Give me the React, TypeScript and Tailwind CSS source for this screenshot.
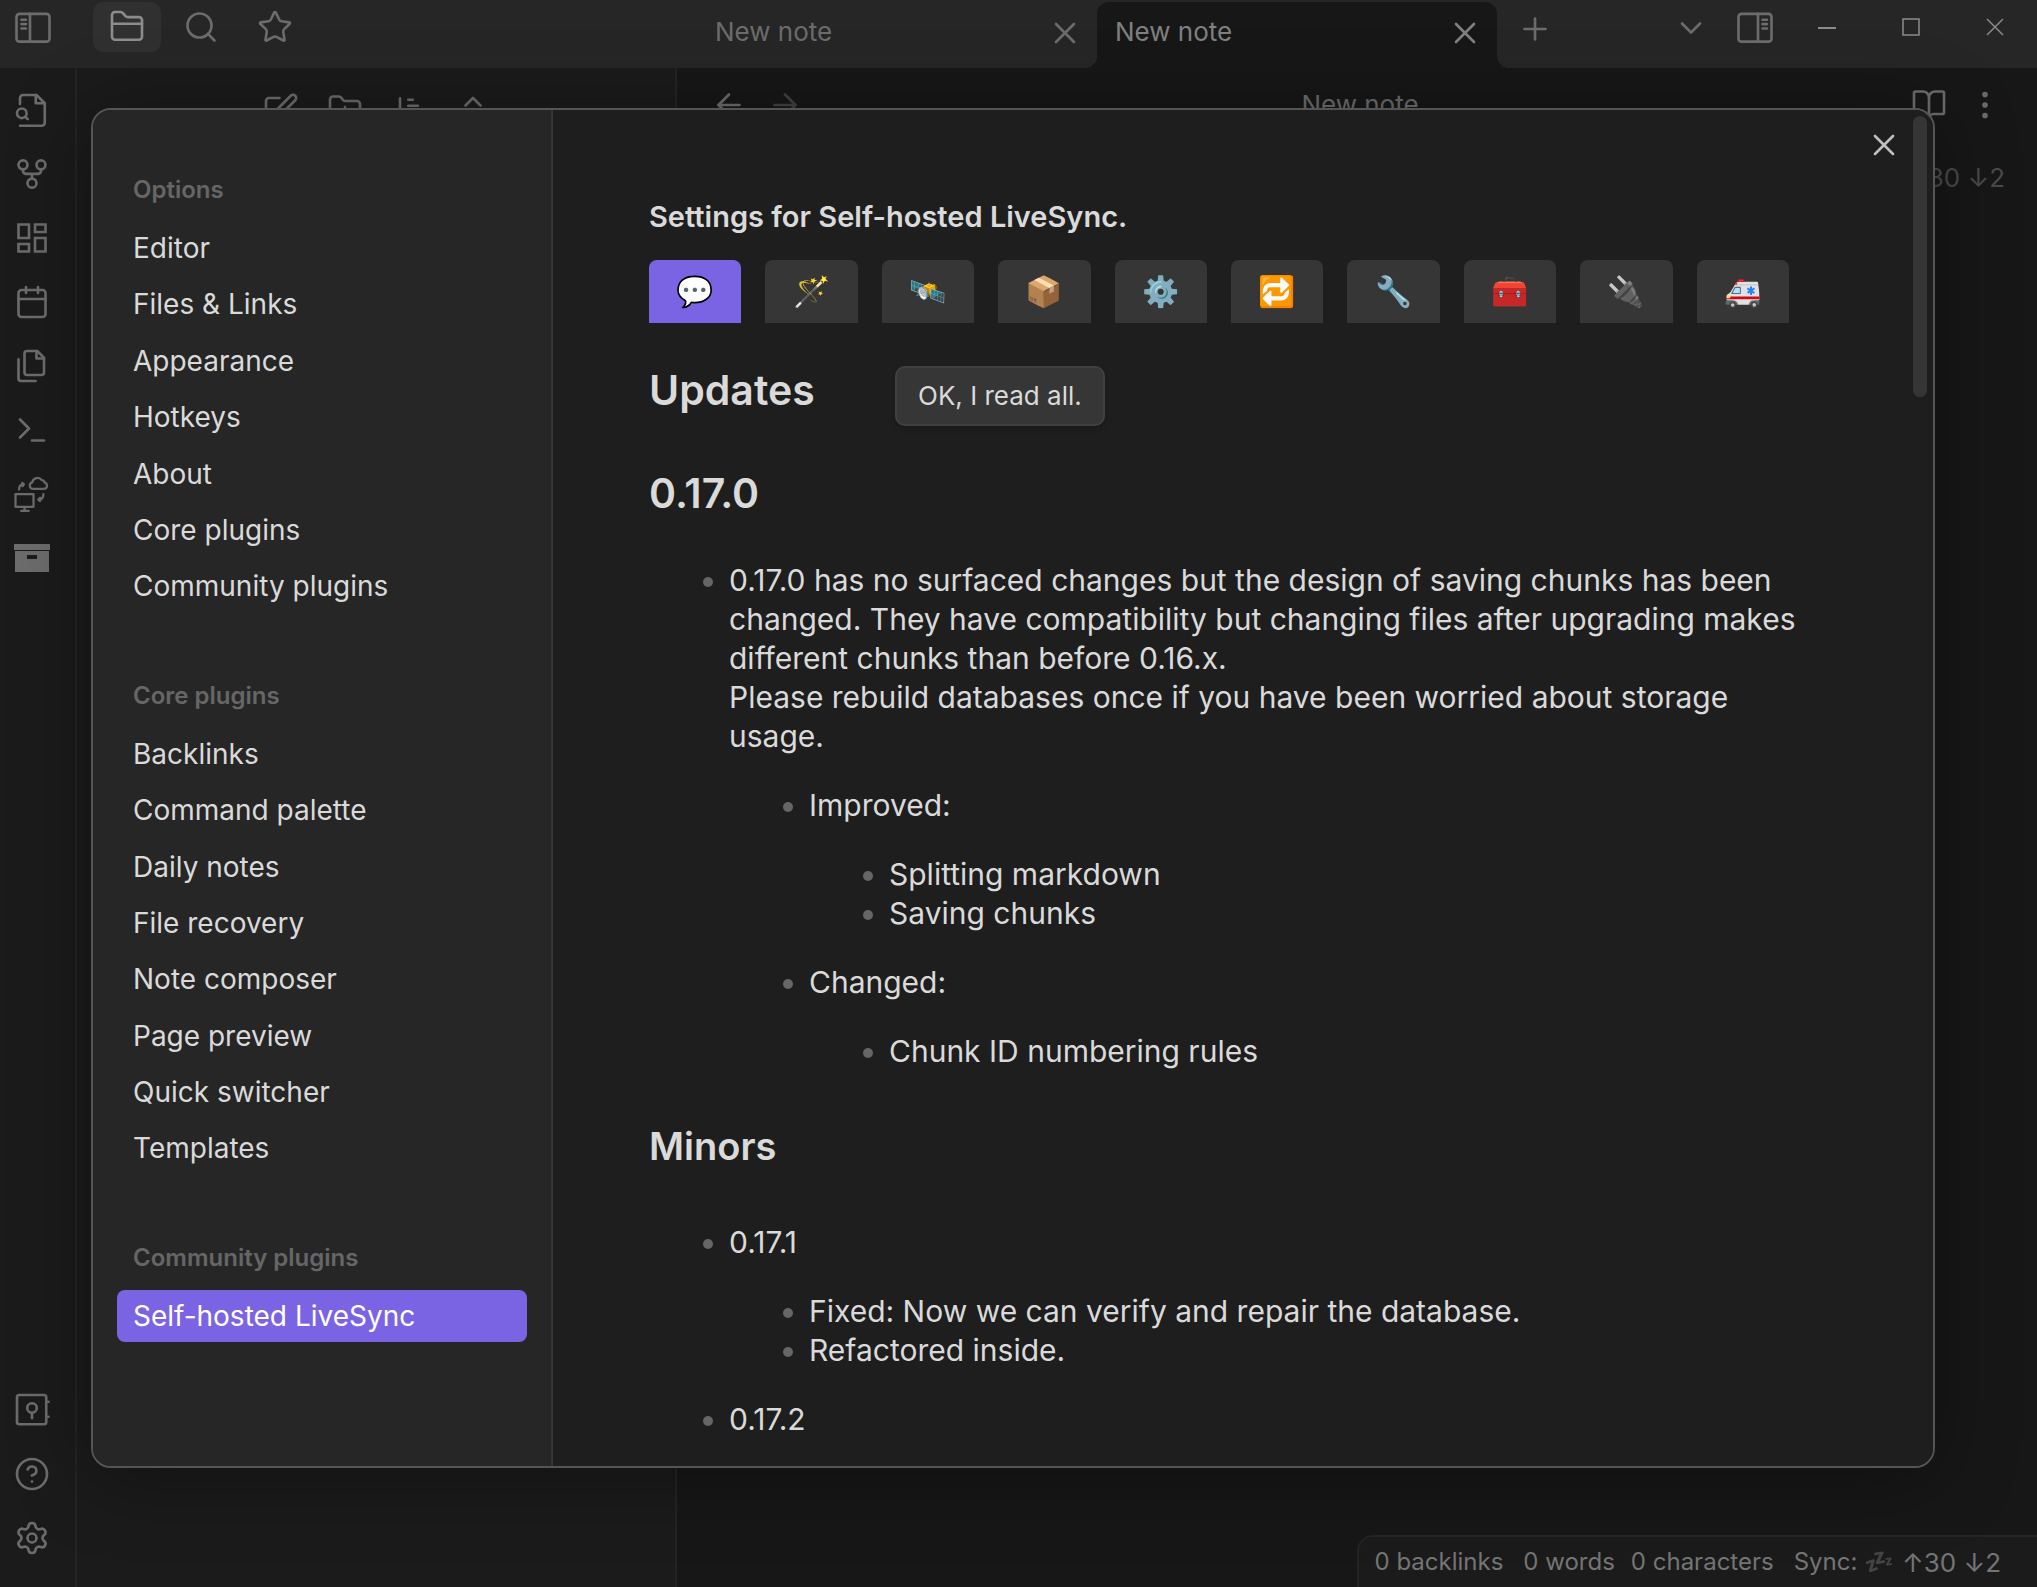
import React from "react";
import {
  Search, Star, Calendar, Terminal, HelpCircle, Settings, X, Plus, ChevronDown, BookOpen, MoreVertical,
  ArrowLeft, ArrowRight, ChevronsUpDown,
} from "lucide-react";

type SvgProps = { size?: number; strokeWidth?: number };

function Svg({ size = 36, strokeWidth = 1.75, children }: SvgProps & { children: React.ReactNode }) {
  return (
    <svg className="overflow-visible" width={size} height={size} viewBox="0 0 24 24" fill="none" stroke="currentColor" strokeWidth={strokeWidth} strokeLinecap="round" strokeLinejoin="round" aria-hidden="true">
      {children}
    </svg>
  );
}

const SidebarLeft = () => (
  <Svg>
    <rect x="1" y="2.600" width="22" height="18.500" rx="2" />
    <path d="M10 2.600v18.500M4.300 6.500h3M4.300 9.400h3M4.300 12.300h3" />
  </Svg>
);
const SidebarRight = () => (
  <Svg>
    <rect x="1" y="2.600" width="22" height="18.500" rx="2" />
    <path d="M14 2.600v18.500M17 6.500h3M17 9.400h3M17 12.300h3" />
  </Svg>
);
const FolderTab = () => (
  <Svg>
    <path d="M2 18.500V4a2 2 0 0 1 2-2h3.800a2 2 0 0 1 1.500.7l1.700 2a2 2 0 0 0 1.500.7H20a2 2 0 0 1 2 2v11.100a2 2 0 0 1-2 2H4a2 2 0 0 1-2-2z" />
    <path d="M2 9.800h20" />
  </Svg>
);
const SearchFile = () => (
  <Svg>
    <path d="M4 8V4a2 2 0 0 1 2-2h9l5.500 5.500V20.500a2 2 0 0 1-2 2H4" />
    <path d="M14.500 2v5.500h6" />
    <circle cx="5.200" cy="14.200" r="3.200" />
    <path d="m7.600 16.600 1.500 1.500" />
  </Svg>
);
const Graph = () => (
  <Svg>
    <circle cx="6" cy="5.900" r="3" />
    <circle cx="18" cy="5.900" r="3" />
    <circle cx="12" cy="18.100" r="3" />
    <path d="M6 8.900v1a2 2 0 0 0 2 2h8a2 2 0 0 0 2-2v-1M12 11.900v3.200" />
  </Svg>
);
const Dashboard = () => (
  <Svg>
    <path d="M3 3h7v9H3zM14 3h7v5h-7zM14 12h7v9h-7zM3 16h7v5H3z" strokeLinejoin="miter" />
  </Svg>
);
const Copies = () => (
  <Svg>
    <path d="M15.500 2H8.600C7.700 2 7 2.700 7 3.600v12.800c0 .9.7 1.600 1.600 1.600h9.800c.9 0 1.600-.7 1.600-1.600V6.500z" />
    <path d="M3 7.600v12.800c0 .9.7 1.600 1.600 1.600h9.800M15 2v5h5" />
  </Svg>
);
const Replicate = () => (
  <Svg strokeWidth={1.5}>
    <path d="M12.400 8.600a2.200 2.200 0 0 1-.2-4.300 3.500 3.500 0 0 1 6.300-1.600 1.900 1.900 0 0 1 1.900 1.700 2.150 2.150 0 0 1-.1 4.200z" />
    <rect x="1" y="12" width="12" height="8.500" />
    <path d="M7 20.500v2.500M4.700 23.200h5.100M3.400 9c0-2.400 1-3.400 2.900-3.400M5.500 4.600l1.100 1-1 1.200M19.600 12c0 2.400-1 3.600-2.800 3.700M17.400 14.500l-1.200 1.200 1.200 1" />
  </Svg>
);
const Archive = () => (
  <svg width="36" height="28" viewBox="0 0 36 28" fill="currentColor" aria-hidden="true">
    <path d="M0 0h36v6H0z" />
    <path fillRule="evenodd" d="M1 7h34v21H1zM13 11v4h10v-4z" />
  </svg>
);
const Vault = () => (
  <Svg>
    <rect x="2" y="2" width="19.500" height="19.500" rx="1.500" />
    <circle cx="12" cy="10.700" r="3.200" />
    <path d="M12 13.900V17.500M22.500 6.500h.5M22.500 16.500h.5" />
  </Svg>
);
const Compose = () => (
  <Svg>
    <path d="M11 4H4a2 2 0 0 0-2 2v14a2 2 0 0 0 2 2h14a2 2 0 0 0 2-2v-7" />
    <path d="M18.500 2.500a2.120 2.120 0 0 1 3 3L12 15l-4 1 1-4z" />
  </Svg>
);
const NewFolder = () => (
  <Svg>
    <path d="M4 20h16a2 2 0 0 0 2-2V8a2 2 0 0 0-2-2h-7.930a2 2 0 0 1-1.660-.9l-.82-1.200A2 2 0 0 0 7.930 3H4a2 2 0 0 0-2 2v13c0 1.100.9 2 2 2Z" />
    <path d="M12 10v6M9 13h6" />
  </Svg>
);
const SortOrder = () => (
  <Svg>
    <path d="M6 4.200v16M11.500 5.200h3M11.500 9.200h6.500M11.500 13.200h10" />
  </Svg>
);

const lucide = { size: 36, strokeWidth: 1.75, "aria-hidden": true } as const;

const ribbonTop = [
  { label: "Open quick switcher", icon: <SearchFile /> },
  { label: "Open graph view", icon: <Graph /> },
  { label: "Create new canvas", icon: <Dashboard /> },
  { label: "Open today's daily note", icon: <Calendar {...lucide} /> },
  { label: "Insert template", icon: <Copies /> },
  { label: "Open command palette", icon: <Terminal {...lucide} /> },
  { label: "Replicate", icon: <Replicate /> },
  { label: "Show history", icon: <Archive /> },
];
const ribbonBottom = [
  { label: "Open another vault", icon: <Vault /> },
  { label: "Help", icon: <HelpCircle {...lucide} /> },
  { label: "Settings", icon: <Settings {...lucide} /> },
];

const navGroups = [
  { title: "Options", items: ["Editor", "Files & Links", "Appearance", "Hotkeys", "About", "Core plugins", "Community plugins"] },
  { title: "Core plugins", items: ["Backlinks", "Command palette", "Daily notes", "File recovery", "Note composer", "Page preview", "Quick switcher", "Templates"] },
  { title: "Community plugins", items: ["Self-hosted LiveSync"] },
];

const tabs = [
  ["💬", "Change log"], ["🪄", "Setup"], ["🛰️", "Remote"], ["📦", "Local"], ["⚙️", "General"],
  ["🔁", "Sync"], ["🔧", "Customize"], ["🧰", "Hatch"], ["🔌", "Plugins"], ["🚑", "Rescue"],
];

function IconButton({ label, className = "", children }: { label: string; className?: string; children: React.ReactNode }) {
  return (
    <button aria-label={label} className={`flex shrink-0 items-center justify-center ${className}`}>
      {children}
    </button>
  );
}

function TitleBar() {
  return (
    <header className="flex h-[68px] shrink-0 bg-[#262626] text-[#6c6c6c]">
      <div className="flex w-[677px] shrink-0 items-start">
        <IconButton label="Collapse left sidebar" className="h-14 w-[66px]"><SidebarLeft /></IconButton>
        <IconButton label="Files" className="mt-[2px] ml-[27px] h-[50px] w-[68px] rounded-[10px] bg-[#303030] text-[#8c8c8c]"><FolderTab /></IconButton>
        <IconButton label="Search" className="mt-[2px] ml-[6px] h-[50px] w-[68px]"><Search {...lucide} /></IconButton>
        <IconButton label="Starred" className="mt-[2px] ml-[6px] h-[50px] w-[68px]"><Star {...lucide} /></IconButton>
      </div>
      <div className="flex min-w-0 flex-1 items-end">
        <div className="flex h-[66px] w-[420px] items-center justify-between pr-[14px] pb-1 pl-[38px] text-[26px]">
          <span className="pb-1">New note</span>
          <IconButton label="Close tab"><X {...lucide} /></IconButton>
        </div>
        <div className="relative flex h-[66px] w-[400px] items-center justify-between rounded-t-xl bg-[#171717] pr-[14px] pb-1 pl-[18px] text-[26px] text-[#808080]">
          <span className="pb-1">New note</span>
          <IconButton label="Close tab"><X {...lucide} /></IconButton>
          <span className="absolute bottom-0 -left-3 size-3 bg-[radial-gradient(circle_at_0_0,transparent_12px,#171717_12px)]" />
          <span className="absolute -right-3 bottom-0 size-3 bg-[radial-gradient(circle_at_100%_0,transparent_12px,#171717_12px)]" />
        </div>
        <div className="flex h-[66px] flex-1 items-start pl-5">
          <IconButton label="New tab" className="h-[54px] w-9"><Plus {...lucide} size={38} /></IconButton>
        </div>
      </div>
      <div className="flex shrink-0 items-start text-[#6c6c6c]">
        <IconButton label="Tab list" className="h-14 w-9"><ChevronDown {...lucide} /></IconButton>
        <IconButton label="Expand right sidebar" className="ml-7 h-14 w-9"><SidebarRight /></IconButton>
        <div className="ml-3 flex text-[#8c8c8c]">
          <IconButton label="Minimize" className="h-[54px] w-[84px]"><svg width="18" height="18" viewBox="0 0 18 18" fill="none" stroke="currentColor" strokeWidth="2" aria-hidden="true"><path d="M0 10h18" /></svg></IconButton>
          <IconButton label="Maximize" className="h-[54px] w-[84px]"><svg width="18" height="18" viewBox="0 0 18 18" fill="none" stroke="currentColor" strokeWidth="1.500" aria-hidden="true"><path d="M1 1h16v16H1z" /></svg></IconButton>
          <IconButton label="Close" className="h-[54px] w-[84px]"><svg width="18" height="18" viewBox="0 0 18 18" fill="none" stroke="currentColor" strokeWidth="1.500" aria-hidden="true"><path d="M1 1l16 16M17 1 1 17" /></svg></IconButton>
        </div>
      </div>
    </header>
  );
}

function Workspace() {
  return (
    <div className="flex min-h-0 flex-1">
      <nav aria-label="Ribbon" className="flex w-[77px] shrink-0 flex-col justify-between border-r-2 border-[#242424] pt-[10px] pr-[11px] pb-[17px] text-[#6c6c6c]">
        <div className="flex flex-col">
          {ribbonTop.map((r) => (
            <IconButton key={r.label} label={r.label} className="h-16">{r.icon}</IconButton>
          ))}
        </div>
        <div className="flex flex-col">
          {ribbonBottom.map((r) => (
            <IconButton key={r.label} label={r.label} className="h-16">{r.icon}</IconButton>
          ))}
        </div>
      </nav>
      <aside className="flex w-[600px] shrink-0 items-start justify-center gap-7 border-r-2 border-[#242424] pt-6 pl-[2px] text-[#6c6c6c]">
        <IconButton label="New note"><Compose /></IconButton>
        <IconButton label="New folder"><NewFolder /></IconButton>
        <IconButton label="Change sort order"><SortOrder /></IconButton>
        <IconButton label="Collapse all"><ChevronsUpDown {...lucide} /></IconButton>
      </aside>
      <main className="relative flex min-w-0 flex-1 flex-col bg-[#171717] text-[#6c6c6c]">
        <div className="flex items-center px-[34px] pt-[17px]">
          <IconButton label="Back"><ArrowLeft {...lucide} /></IconButton>
          <IconButton label="Forward" className="ml-5 opacity-50"><ArrowRight {...lucide} /></IconButton>
          <span className="flex-1 pl-[6px] text-center text-[26px]">New note</span>
          <IconButton label="Reading view"><BookOpen {...lucide} /></IconButton>
          <IconButton label="More options" className="ml-5"><MoreVertical {...lucide} /></IconButton>
        </div>
        <span className="mt-9 mr-8 self-end text-[26px] leading-[36px] text-[#4a4a4a]">↑30 ↓2</span>
        <footer className="absolute right-0 bottom-0 flex h-[52px] items-center rounded-tl-2xl border-t-2 border-l-2 border-[#242424] bg-[#1b1b1b] pr-9 pl-4 text-[24px] text-[#757575]">
          <span>0 backlinks</span>
          <span className="ml-5">0 words</span>
          <span className="ml-4">0 characters</span>
          <span className="ml-5">Sync: <span className="opacity-60 grayscale">💤</span></span>
          <span className="ml-2 text-[26px]">↑30 ↓2</span>
        </footer>
      </main>
    </div>
  );
}

function SettingsNav() {
  return (
    <nav aria-label="Settings" className="flex w-[460px] shrink-0 flex-col gap-[67px] border-r-2 border-[#363636] bg-[#262626] px-6 pt-16">
      {navGroups.map((g) => (
        <section key={g.title}>
          <h2 className="px-4 text-[24px] leading-[32px] font-semibold text-[#666666]">{g.title}</h2>
          <ul className="mt-4 flex flex-col gap-1">
            {g.items.map((item) => {
              const active = item === "Self-hosted LiveSync";
              return (
                <li key={item} className="flex">
                  <button aria-current={active} className={`flex-1 rounded-lg px-4 py-2 text-left text-[28px] leading-[1.3] ${active ? "bg-[#7b64e3] text-white" : "text-[#dadada]"}`}>
                    {item}
                  </button>
                </li>
              );
            })}
          </ul>
        </section>
      ))}
    </nav>
  );
}

const listClass = "list-disc pl-20 marker:text-[#666666]";

function SettingsContent() {
  return (
    <section className="min-w-0 flex-1 overflow-hidden bg-[#1e1e1e] pt-[87px] pr-[118px] pl-24 text-[30px] leading-[39px] text-[#dadada]">
      <h1 className="text-[29px] font-semibold">Settings for Self-hosted LiveSync.</h1>
      <div role="tablist" className="mt-6 flex gap-6 pr-[26px]">
        {tabs.map(([emoji, label], i) => (
          <button key={label} role="tab" aria-label={label} aria-selected={i === 0} className={`h-[63px] flex-1 rounded-t-lg text-center ${i === 0 ? "bg-[#7b64e3]" : "bg-[#363636]"}`}>
            {emoji}
          </button>
        ))}
      </div>
      <div className="mt-[43px] flex items-start">
        <h2 className="w-[246px] text-[41px] leading-[48px] font-semibold">Updates</h2>
        <button className="h-[60px] rounded-[10px] border-2 border-[#404040] bg-[#363636] px-[21px] pb-[2px] text-[26px] shadow-md">OK, I read all.</button>
      </div>
      <h2 className="mt-[41px] text-[41px] leading-[52px] font-semibold">0.17.0</h2>
      <ul className={`mt-[42px] ${listClass}`}>
        <li>
          <p>
            0.17.0 has no surfaced changes but the design of saving chunks has been changed. They have compatibility but changing files after upgrading makes different chunks than before 0.16.x.
            <br />
            Please rebuild databases once if you have been worried about storage usage.
          </p>
          <ul className={`my-[30px] ${listClass}`}>
            <li>
              Improved:
              <ul className={`my-[30px] ${listClass}`}>
                <li>Splitting markdown</li>
                <li>Saving chunks</li>
              </ul>
            </li>
            <li>
              Changed:
              <ul className={`mt-[30px] ${listClass}`}>
                <li>Chunk ID numbering rules</li>
              </ul>
            </li>
          </ul>
        </li>
      </ul>
      <h3 className="mt-[52px] text-[38px] leading-[47px] font-semibold">Minors</h3>
      <ul className={`mt-[53px] ${listClass}`}>
        <li>
          0.17.1
          <ul className={`my-[30px] ${listClass}`}>
            <li>Fixed: Now we can verify and repair the database.</li>
            <li>Refactored inside.</li>
          </ul>
        </li>
        <li>0.17.2</li>
      </ul>
    </section>
  );
}

export default function App() {
  return (
    <div className="relative flex h-screen flex-col overflow-hidden bg-[#1b1b1b] font-['Inter','Noto_Color_Emoji',sans-serif]">
      <TitleBar />
      <Workspace />
      <div className="absolute inset-0 flex pt-[108px] pr-[102px] pb-[119px] pl-[91px]">
        <div role="dialog" aria-label="Settings" className="relative flex min-w-0 flex-1 overflow-hidden rounded-[20px] border-2 border-[#555555] shadow-[0_8px_80px_rgba(0,0,0,0.35)]">
          <SettingsNav />
          <SettingsContent />
          <button aria-label="Close settings" className="absolute top-[17px] right-[31px] text-[#c0c0c0]"><X size={36} strokeWidth={1.75} aria-hidden /></button>
          <div className="absolute top-[6px] right-[6px] h-[281px] w-[14px] rounded-full bg-[#353535]" />
        </div>
      </div>
    </div>
  );
}
